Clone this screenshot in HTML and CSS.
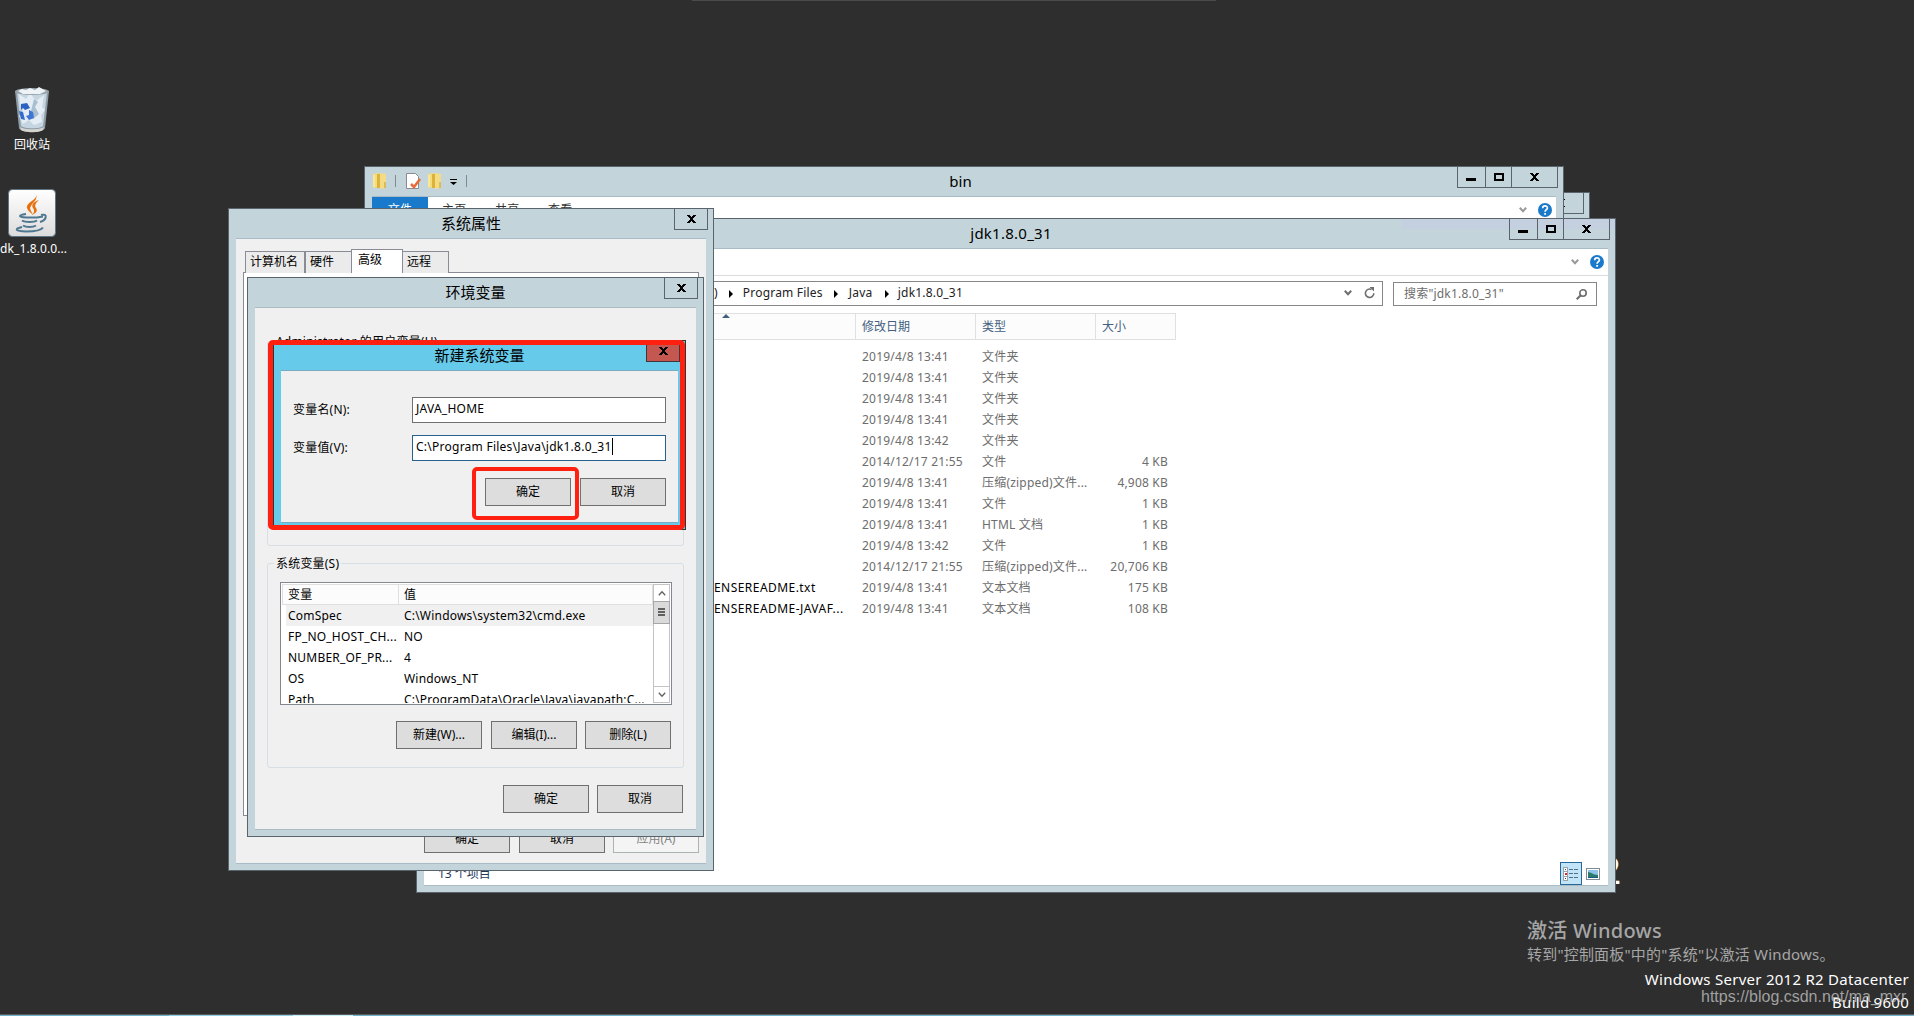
FILE: index.html
```html
<!DOCTYPE html>
<html lang="zh-CN">
<head>
    <meta charset="UTF-8">
    <title>新建系统变量</title>
    <link rel="stylesheet" href="styles.css">
</head>
<body>
<!-- 公用图标 -->
<svg class="icon-defs" width="0" height="0">
    <symbol id="i-close" viewBox="0 0 9 8"><path d="M0 0h3v1h1v1h1v-1h1v-1h3v1h-1v1h-1v1h-1v2h1v1h1v1h1v1h-3v-1h-1v-1h-1v1h-1v1h-3v-1h1v-1h1v-1h1v-2h-1v-1h-1v-1h-1z"/></symbol>
    <symbol id="i-min" viewBox="0 0 10 8"><path d="M0 5h10v3h-10z"/></symbol>
    <symbol id="i-max" viewBox="0 0 10 8"><path fill-rule="evenodd" d="M0 0h10v8h-10zM2 2v4h6v-4z"/></symbol>
    <symbol id="i-chevron" viewBox="0 0 8 6"><path d="M.8 .8L4 4.2 7.2 .8" fill="none" stroke="currentColor" stroke-width="2"/></symbol>
    <symbol id="i-thin" viewBox="0 0 8 6"><path d="M.8 .8L4 4.2 7.2 .8" fill="none" stroke="currentColor" stroke-width="1.300"/></symbol>
    <symbol id="i-help" viewBox="0 0 14 14"><circle cx="7" cy="7" r="7" fill="#1979ca"/><path d="M4.7 5.2c0-3 4.7-2.9 4.7-.3 0 1.700-2.300 1.700-2.300 3.800" fill="none" stroke="#fff" stroke-width="1.700"/><path d="M6.200 10h1.800v1.800h-1.800z" fill="#fff"/></symbol>
    <symbol id="i-folder" viewBox="0 0 13 16"><path d="M0 1l6-1v14l-6 1z" fill="#f4dc7a"/><path d="M4 1h5v14h-5z" fill="#dcb23a"/><path d="M7 0l6 1v14l-6 1z" fill="#f3dc84"/><path d="M1 2v12" stroke="#fff3b8"/><path d="M12 9v6" stroke="#c49a2c"/></symbol>
</svg>

<div class="desktop">
    <!-- 桌面图标 -->
    <div class="shortcut bin-shortcut">
        <svg width="36" height="46" viewBox="0 0 36 46">
            <path d="M1 4l4 37c1 5 25 5 26 0l4-37z" fill="#8e9ca5"/>
            <path d="M3 5l4 34c3 3 20 3 22 0l4-34z" fill="#c5d5e1"/>
            <path d="M5 7l7 5 4-6 6 8 8-6-2 12 3 3-4 5 1 7-8 3-5-5-6 4-4-8 4-5-3-7z" fill="#e5edf4"/>
            <path d="M20 12l4 3-3 5 4 7-6 5-2-8z" fill="#a9bfd1"/>
            <ellipse cx="18" cy="4.500" rx="17" ry="3.500" fill="#98a3ab"/>
            <path d="M4 4l4-2 4 1 4-2 5 2 4-3 7 4-6 3h-17z" fill="#edf3f7"/>
            <path d="M7 17l6-1 3 5-5 2-2-2-2 2z" fill="#2b63c4"/>
            <path d="M15 23l4 2 1 6-5 2-3-4 3-1z" fill="#3c75d4"/>
            <path d="M5 24l4 1 2 8-4-1z" fill="#336bcd"/>
            <path d="M6 40c4 3 20 3 24 0l-1 3c-3 3-19 3-22 0z" fill="#d4d3cf"/>
        </svg>
        <span>回收站</span>
    </div>
    <div class="shortcut java-shortcut">
        <svg width="48" height="48" viewBox="0 0 48 48">
            <defs><linearGradient id="plate" x2="0" y2="1"><stop offset="0" stop-color="#fff"/><stop offset="1" stop-color="#dcdcdc"/></linearGradient></defs>
            <rect x=".5" y=".5" width="47" height="47" rx="4" fill="url(#plate)" stroke="#5d7585"/>
            <path d="M28 5c2 6-10 8-9 14 1 3 3 4 6 7-2-5-4-6-2-9 2-4 7-6 5-12z" fill="#e8700c"/>
            <path d="M31 11c-6 2-8 5-6 8 2 3 1 5-1 7 4-2 6-4 4-7-2-3 0-5 3-8z" fill="#e8700c"/>
            <g fill="none" stroke="#4f7890" stroke-width="2">
                <path d="M18 25c-8 1-8 3 0 3.500h11l6-1"/>
                <path d="M33 26c7-2 6 5-1 7"/>
                <path d="M14 31.500c3 2 12 2 15 0M15 36.500c3 2 10 2 13 0"/>
                <path d="M14 38c-8 2-7 4 4 4.500 9 0 15-1 17-4"/>
            </g>
        </svg>
        <span>dk_1.8.0.0...</span>
    </div>
    <div class="wallpaper-text">2</div>
    <div class="activate">
        <p class="activate-title">激活 Windows</p>
        <p class="activate-note">转到"控制面板"中的"系统"以激活 Windows。</p>
    </div>
    <div class="build">
        <p>Windows Server 2012 R2 Datacenter</p>
        <p>Build 9600</p>
    </div>
    <div class="url">https://blog.csdn.net/ma_mxr</div>
    <div class="top-line"></div>
    <div class="taskbar"></div>

    <!-- 最后面的窗口 -->
    <div class="window back-window">
        <div class="titlebar">
            <div class="controls"><i class="ctl wide"><svg class="x"><use href="#i-close"/></svg></i></div>
        </div>
    </div>

    <!-- bin 窗口 -->
    <div class="window bin-window">
        <div class="titlebar">
            <div class="quick">
                <svg width="13" height="16"><use href="#i-folder"/></svg>
                <i class="bar"></i>
                <svg class="doc" width="15" height="16" viewBox="0 0 15 16"><path d="M.5 .5h9l3 3v12h-12z" fill="#fff" stroke="#858b90"/><path d="M5 11l3 3 6-8" fill="none" stroke="#e8693a" stroke-width="2.500"/></svg>
                <svg class="fold" width="13" height="16"><use href="#i-folder"/></svg>
                <svg class="drop" width="7" height="6" viewBox="0 0 7 6"><path d="M0 0h7v1h-7zM0 3h7l-3.500 3z"/></svg>
                <i class="bar"></i>
            </div>
            <div class="title">bin</div>
            <div class="controls">
                <i class="ctl min"><svg class="m"><use href="#i-min"/></svg></i>
                <i class="ctl max"><svg class="m"><use href="#i-max"/></svg></i>
                <i class="ctl wide"><svg class="x"><use href="#i-close"/></svg></i>
            </div>
        </div>
        <div class="client white">
            <div class="ribbon">
                <span class="file-tab">文件</span><span>主页</span><span>共享</span><span>查看</span>
                <svg class="chev" width="8" height="6"><use href="#i-chevron"/></svg>
                <svg width="14" height="14"><use href="#i-help"/></svg>
            </div>
        </div>
    </div>

    <!-- jdk1.8.0_31 窗口 -->
    <div class="window jdk-window">
        <div class="titlebar">
            <div class="title">jdk1.8.0_31</div>
            <div class="controls">
                <i class="ctl min"><svg class="m"><use href="#i-min"/></svg></i>
                <i class="ctl max"><svg class="m"><use href="#i-max"/></svg></i>
                <i class="ctl wide"><svg class="x"><use href="#i-close"/></svg></i>
            </div>
        </div>
        <div class="client white">
            <div class="ribbon">
                <svg class="chev" width="8" height="6"><use href="#i-chevron"/></svg>
                <svg width="14" height="14"><use href="#i-help"/></svg>
            </div>
            <div class="nav">
                <div class="address">
                    <span class="paren">)</span><i class="arrow"></i>
                    <span class="seg-files">Program Files</span><i class="arrow"></i>
                    <span class="seg-java">Java</span><i class="arrow"></i>
                    <span class="seg-jdk">jdk1.8.0_31</span>
                    <svg class="chev" width="8" height="6"><use href="#i-chevron"/></svg>
                    <svg width="11" height="12" viewBox="0 0 11 12"><path d="M7.500 2.500a4.200 4.200 0 1 0 2.300 3.700" fill="none" stroke="#6d6d6d" stroke-width="1.600"/><path d="M5.500 0h4.500v4.500z" fill="#6d6d6d"/></svg>
                </div>
                <div class="search">
                    <span>搜索"jdk1.8.0_31"</span>
                    <svg width="11" height="11" viewBox="0 0 11 11" fill="none" stroke="#6d6d6d"><circle cx="7" cy="4" r="3.200" stroke-width="1.600"/><path d="M4.700 6.300L.7 10.300" stroke-width="2"/></svg>
                </div>
            </div>
            <div class="file-grid file-head">
                <span><i class="sort"></i></span><span>修改日期</span><span>类型</span><span>大小</span>
            </div>
            <div class="file-list">
                <div class="file-grid"><span></span><span>2019/4/8 13:41</span><span>文件夹</span><span></span></div>
                <div class="file-grid"><span></span><span>2019/4/8 13:41</span><span>文件夹</span><span></span></div>
                <div class="file-grid"><span></span><span>2019/4/8 13:41</span><span>文件夹</span><span></span></div>
                <div class="file-grid"><span></span><span>2019/4/8 13:41</span><span>文件夹</span><span></span></div>
                <div class="file-grid"><span></span><span>2019/4/8 13:42</span><span>文件夹</span><span></span></div>
                <div class="file-grid"><span></span><span>2014/12/17 21:55</span><span>文件</span><span>4 KB</span></div>
                <div class="file-grid"><span></span><span>2019/4/8 13:41</span><span>压缩(zipped)文件...</span><span>4,908 KB</span></div>
                <div class="file-grid"><span></span><span>2019/4/8 13:41</span><span>文件</span><span>1 KB</span></div>
                <div class="file-grid"><span></span><span>2019/4/8 13:41</span><span>HTML 文档</span><span>1 KB</span></div>
                <div class="file-grid"><span></span><span>2019/4/8 13:42</span><span>文件</span><span>1 KB</span></div>
                <div class="file-grid"><span></span><span>2014/12/17 21:55</span><span>压缩(zipped)文件...</span><span>20,706 KB</span></div>
                <div class="file-grid"><span>ENSEREADME.txt</span><span>2019/4/8 13:41</span><span>文本文档</span><span>175 KB</span></div>
                <div class="file-grid"><span>ENSEREADME-JAVAF...</span><span>2019/4/8 13:41</span><span>文本文档</span><span>108 KB</span></div>
            </div>
            <div class="statusbar">
                <span class="count">13 个项目</span>
                <div class="view on"><svg width="16" height="14" viewBox="0 0 16 14"><rect x=".5" y=".5" width="4" height="13" fill="#fff" stroke="#9aa3ab"/><path d="M1 4.500h3M1 9.500h3" stroke="#9aa3ab"/><path d="M2 2h1v1h-1zM2 11h1v1h-1z" fill="#345"/><path d="M2 6h2v2h-2z" fill="#d22"/><path d="M6 2.500h4M11 2.500h4M6 6.500h4M11 6.500h4M6 10.500h4M11 10.500h4" stroke="#51708c"/></svg></div>
                <div class="view"><svg width="14" height="12" viewBox="0 0 14 12"><rect x=".5" y=".5" width="13" height="11" fill="#fff" stroke="#7f8b96"/><path d="M2 2h10v8h-10z" fill="#8cc4ec"/><path d="M2 4c3 0 5 3 10 3v3h-10z" fill="#2c7a6c"/><path d="M2 9h10v1h-10z" fill="#1f5a86"/></svg></div>
            </div>
        </div>
    </div>

    <!-- 系统属性 -->
    <div class="window sys-window">
        <div class="titlebar">
            <div class="title">系统属性</div>
            <div class="controls"><i class="ctl single"><svg class="x"><use href="#i-close"/></svg></i></div>
        </div>
        <div class="client">
            <div class="tabs"><span class="tab t1">计算机名</span><span class="tab t2">硬件</span><span class="tab active">高级</span><span class="tab t4">远程</span></div>
            <div class="tab-panel"></div>
            <div class="buttons"><button>确定</button><button>取消</button><button disabled>应用(A)</button></div>
        </div>
    </div>

    <!-- 环境变量 -->
    <div class="window env-window">
        <div class="titlebar">
            <div class="title">环境变量</div>
            <div class="controls"><i class="ctl single"><svg class="x"><use href="#i-close"/></svg></i></div>
        </div>
        <div class="client">
            <fieldset><legend>Administrator 的用户变量(U)</legend></fieldset>
            <fieldset>
                <legend>系统变量(S)</legend>
                <div class="var-box">
                    <div class="var-table">
                        <div class="var-row var-head"><span>变量</span><span>值</span></div>
                        <div class="var-row selected"><span>ComSpec</span><span>C:\Windows\system32\cmd.exe</span></div>
                        <div class="var-row"><span>FP_NO_HOST_CH...</span><span>NO</span></div>
                        <div class="var-row"><span>NUMBER_OF_PR...</span><span>4</span></div>
                        <div class="var-row"><span>OS</span><span>Windows_NT</span></div>
                        <div class="var-row"><span>Path</span><span>C:\ProgramData\Oracle\Java\javapath;C...</span></div>
                    </div>
                    <div class="scrollbar">
                        <i class="sb-btn"><svg class="up" width="8" height="6"><use href="#i-thin"/></svg></i>
                        <i class="sb-thumb"></i>
                        <i class="sb-btn sb-down"><svg width="8" height="6"><use href="#i-thin"/></svg></i>
                    </div>
                </div>
                <div class="buttons"><button>新建(W)...</button><button>编辑(I)...</button><button>删除(L)</button></div>
            </fieldset>
            <div class="buttons env-ok"><button>确定</button><button>取消</button></div>
        </div>
    </div>

    <!-- 新建系统变量 -->
    <div class="window new-window">
        <div class="titlebar">
            <div class="title">新建系统变量</div>
            <div class="controls"><i class="ctl single red"><svg class="x"><use href="#i-close"/></svg></i></div>
        </div>
        <div class="client">
            <div class="field"><label>变量名(N):</label><div class="input">JAVA_HOME</div></div>
            <div class="field"><label>变量值(V):</label><div class="input focus">C:\Program Files\Java\jdk1.8.0_31<i class="caret"></i></div></div>
            <div class="buttons"><button>确定</button><button>取消</button></div>
        </div>
    </div>

    <!-- 红框标注 -->
    <div class="mark mark-dialog"></div>
    <div class="mark mark-ok"></div>
</div>
</body>
</html>
```

FILE: styles.css
```css
* {
    box-sizing: border-box;
}

body {
    margin: 0;
    overflow: hidden;
    background: #2e2e2e;
    color: #000;
    font: 12px/16px "Noto Sans", "Noto Sans CJK SC", sans-serif;
    letter-spacing: 0.2px;
}

p {
    margin: 0;
}

i {
    display: block;
    flex: none;
}

svg {
    display: block;
    flex: none;
}

.icon-defs {
    position: absolute;
}

.desktop {
    position: relative;
    width: 1914px;
    height: 1016px;
    overflow: hidden;
    white-space: nowrap;
}

/* 桌面图标 */
.shortcut {
    position: absolute;
    display: flex;
    flex-direction: column;
    align-items: center;
    color: #fff;
}

.bin-shortcut {
    left: 14px;
    top: 87px;
    gap: 4px;
    letter-spacing: 0;
}

.java-shortcut {
    left: 0;
    top: 189px;
    gap: 4px;
    align-items: flex-start;
    letter-spacing: 0.1px;
}

.java-shortcut svg {
    margin-left: 8px;
}

/* 桌面文字 */
.wallpaper-text {
    position: absolute;
    left: 1599px;
    top: 844px;
    color: #fff;
    font-size: 39px;
    line-height: 50px;
}

.activate {
    position: absolute;
    left: 1527px;
    top: 917px;
    color: #a6a6a6;
}

.activate-title {
    font-size: 20px;
    line-height: 27px;
    font-weight: 500;
    letter-spacing: 0.3px;
}

.activate-note {
    font-size: 15px;
    line-height: 20px;
}

.build {
    position: absolute;
    right: 5px;
    top: 968px;
    color: #fff;
    font-size: 15px;
    line-height: 23px;
    letter-spacing: 0.27px;
    text-align: right;
}

.url {
    position: absolute;
    left: 1701px;
    top: 987px;
    color: rgba(200, 200, 200, 0.75);
    font: 16px/20px "Liberation Sans", sans-serif;
    letter-spacing: 0;
}

.top-line {
    position: absolute;
    left: 692px;
    top: 0;
    width: 524px;
    height: 1px;
    background: #4b4b4b;
}

.taskbar {
    position: absolute;
    left: 0;
    bottom: 0;
    width: 100%;
    height: 2px;
    border-top: 1px solid #5a5a5a;
    background: linear-gradient(90deg, #6fb3cd 169px, #8fd0e4 169px 293px, #c5eef5 293px 353px, #6fb3cd 353px);
}

/* 窗口 */
.window {
    position: absolute;
    display: flex;
    flex-direction: column;
    border: 1px solid #5b646d;
    background: #c3d5db;
}

.back-window {
    left: 390px;
    top: 192px;
    width: 1200px;
    height: 600px;
}

.bin-window {
    left: 364px;
    top: 166px;
    width: 1200px;
    height: 675px;
}

.jdk-window {
    left: 416px;
    top: 218px;
    width: 1200px;
    height: 675px;
}

.sys-window {
    left: 228px;
    top: 208px;
    width: 486px;
    height: 663px;
}

.env-window {
    left: 247px;
    top: 277px;
    width: 457px;
    height: 560px;
}

.new-window {
    left: 273px;
    top: 340px;
    width: 413px;
    height: 190px;
    border-color: #333;
    background: #66caea;
}

.titlebar {
    display: grid;
    height: 29px;
    flex: none;
}

.titlebar > * {
    grid-area: 1 / 1;
}

.jdk-window .titlebar {
    background: linear-gradient(#c4d0e0, #c4d0e0) right top / 213px 10px no-repeat;
}

.title {
    font-size: 15px;
    line-height: 28px;
    letter-spacing: 0;
    text-align: center;
}

.bin-window .title {
    padding-right: 7px;
}

.jdk-window .title {
    padding-right: 10px;
    letter-spacing: 0.25px;
}

.controls {
    display: flex;
    justify-self: end;
    height: 21px;
    margin-right: 5px;
}

.ctl {
    display: flex;
    align-items: center;
    justify-content: center;
    border-left: 1px solid #5b646d;
    border-bottom: 1px solid #5b646d;
}

.min { width: 28px; padding-right: 1px; }
.max { width: 26px; }

.wide {
    width: 47px;
    border-right: 1px solid #5b646d;
}

.single {
    width: 34px;
    border-right: 1px solid #5b646d;
}

.red {
    background: #c45850;
    border-color: #43363a;
}

.x {
    width: 9px;
    height: 8px;
}

.m {
    width: 10px;
    height: 8px;
}

.client {
    display: flex;
    flex-direction: column;
    flex: 1;
    min-height: 0;
    margin: 0 7px 6px;
    border-top: 1px solid #a9bbc5;
    border-bottom: 1px solid #a9bbc5;
    background: #f0f0f0;
}

.white {
    background: #fff;
}

.new-window .client {
    border-color: #7ba9c0;
}

/* 快速访问工具栏 */
.quick {
    display: flex;
    align-items: center;
    padding: 0 0 2px 8px;
    z-index: 1;
}

.bar {
    width: 1px;
    height: 12px;
    margin-left: 9px;
    background: #7d8b93;
}

.doc { margin-left: 10px; }
.fold { margin-left: 7px; }
.drop { margin: 3px 0 0 9px; }

/* 功能区 */
.ribbon {
    display: flex;
    flex: none;
    align-items: center;
    height: 27px;
    padding-right: 4px;
    color: #333;
}

.ribbon span {
    width: 53px;
    padding-left: 14px;
}

.ribbon .file-tab {
    width: 56px;
    padding-left: 0;
    background: #1979ca;
    color: #fff;
    line-height: 26px;
    text-align: center;
}

.bin-window .ribbon {
    height: 26px;
}

.chev {
    margin-left: auto;
    margin-right: 11px;
    color: #999;
}

.jdk-window .ribbon {
    border-bottom: 1px solid #dadbdc;
}

/* 地址栏 */
.nav {
    display: flex;
    flex: none;
    gap: 10px;
    height: 37px;
    padding: 5px 11px 7px 140px;
}

.address {
    display: flex;
    flex: 1;
    align-items: center;
    border: 1px solid #868686;
    padding: 0 7px 1px 0;
    color: #222;
}

.paren { margin-left: 149px; }

.arrow {
    border: 4px solid transparent;
    border-left-color: #000;
    border-right: 0;
    margin: 1px 0 0 13px;
}

.paren + .arrow { margin-left: 11px; }

.seg-files {
    width: 90px;
    margin-left: 10px;
}

.seg-java {
    width: 23px;
    margin-left: 11px;
}

.seg-jdk {
    margin-left: 9px;
}

.seg-files + .arrow { margin-left: 1px; }

.address .chev {
    margin-right: 12px;
    color: #6d6d6d;
}

.search {
    display: flex;
    align-items: center;
    justify-content: space-between;
    width: 204px;
    margin-top: 1px;
    padding: 0 9px 0 10px;
    border: 1px solid #868686;
    color: #6d6d6d;
}

/* 文件列表 */
.file-grid {
    display: grid;
    grid-template-columns: 432px 120px 120px 80px;
    flex: none;
    height: 21px;
    line-height: 21px;
    color: #6d6d6d;
}

.file-grid span {
    padding-left: 6px;
}

.file-grid span:first-child {
    padding-left: 290px;
    color: #000;
    letter-spacing: 0.45px;
}

.file-grid span:last-child {
    padding: 0 8px 0 0;
    text-align: right;
}

.file-head {
    width: 752px;
    height: 27px;
    line-height: 25px;
    border: 1px solid #dfe0e2;
    border-left: 0;
    background: #fcfcfc;
    color: #44607f;
    letter-spacing: 0;
}

.file-head span {
    border-right: 1px solid #dfe0e2;
}

.file-head span:last-child {
    padding-left: 6px;
    border: 0;
    text-align: left;
}

.sort {
    width: 8px;
    margin-left: 8px;
    border: 4px solid transparent;
    border-top: 0;
    border-bottom-color: #44607f;
}

.file-list {
    flex: 1;
    padding-top: 6px;
}

.statusbar {
    display: flex;
    align-items: flex-end;
    height: 23px;
    gap: 4px;
    padding-right: 8px;
    color: #1e395b;
}

.count {
    margin: 0 auto 3px 14px;
    letter-spacing: 0;
}

.view {
    display: flex;
    align-items: center;
    height: 23px;
}

.on {
    width: 22px;
    justify-content: center;
    border: 1px solid #26689c;
    background: #c2e4f7;
}

/* 按钮 */
.buttons {
    display: flex;
    flex: none;
    justify-content: flex-end;
    gap: 9px;
}

button {
    width: 86px;
    height: 28px;
    padding: 0;
    border: 1px solid #707070;
    background: #ddd;
    color: #000;
    font: inherit;
}

button:disabled {
    border-color: #adb2b5;
    background: #f4f4f4;
    color: #838383;
}

/* 系统属性标签页 */
.tabs {
    display: flex;
    align-items: flex-end;
    height: 34px;
    padding-left: 9px;
    letter-spacing: 0;
}

.tab {
    height: 22px;
    padding-left: 4px;
    border: 1px solid #898c95;
    border-bottom: 0;
    background: #ebebeb;
    line-height: 20px;
}

.t1 { width: 60px; }
.t2 { width: 46px; border-right: 0; }
.t4 { width: 46px; border-left: 0; }

.active {
    width: 52px;
    height: 24px;
    padding-left: 6px;
    background: #fff;
}

.tab-panel {
    height: 544px;
    margin: 0 7px;
    border: 1px solid #898c95;
    background: #fff;
}

.sys-window .tabs {
    z-index: 1;
    margin-bottom: -1px;
}

.sys-window .buttons {
    padding: 9px 7px 0;
}

.sys-window button:last-child,
fieldset button:last-child {
    margin-left: -1px;
}

/* 环境变量 */
.env-window .client {
    padding: 25px 12px 0;
}

fieldset {
    height: 213px;
    min-width: 0;
    margin: 0 0 9px;
    padding: 0 11px 0 12px;
    border: 1px solid #d5dfe5;
    border-radius: 3px;
    flex: none;
}

fieldset .buttons {
    padding-right: 1px;
}

legend {
    margin-left: -6px;
    padding: 1px 2px 0;
}

.var-box {
    display: flex;
    height: 123px;
    margin: 10px 0 16px;
    padding: 1px;
    border: 1px solid #828790;
    background: #fff;
    overflow: hidden;
}

.var-table {
    flex: 1;
    overflow: hidden;
}

.var-row {
    display: grid;
    grid-template-columns: 111px 1fr;
    height: 21px;
    margin-left: 4px;
    line-height: 21px;
}

.var-row span {
    padding-left: 2px;
}

.var-row span + span {
    padding-left: 7px;
}

.var-head {
    margin-left: 0;
    padding-left: 4px;
    border: 1px solid #dedfe1;
    background: #fcfcfc;
    line-height: 20px;
}

.var-head span {
    padding-left: 1px;
}

.var-head span + span {
    padding-left: 5px;
    border-left: 1px solid #dedfe1;
}

.selected {
    background: #f0f0f0;
}

.scrollbar {
    display: flex;
    flex-direction: column;
    width: 17px;
    border: 1px solid #c3c3c3;
    color: #606060;
}

.sb-btn {
    display: flex;
    align-items: center;
    justify-content: center;
    height: 16px;
}

.up {
    transform: rotate(180deg);
}

.sb-thumb {
    height: 23px;
    margin: 0 -1px;
    padding: 6px 4px;
    border: 1px solid #a6a6a6;
    background: repeating-linear-gradient(#606060 0 2px, #dadada 2px 3px) content-box, #dadada;
}

.sb-down {
    margin-top: auto;
    border-top: 1px solid #c3c3c3;
}

.env-ok {
    gap: 8px;
    padding: 8px 1px 0;
}

/* 新建系统变量 */
.new-window .client {
    padding: 26px 12px 0;
}

.new-window .titlebar .title {
    line-height: 29px;
}

.field {
    display: flex;
    flex: none;
    height: 26px;
    margin-bottom: 12px;
}

.field label {
    width: 119px;
    line-height: 26px;
}

.input {
    display: flex;
    flex: 1;
    padding-left: 3px;
    border: 1px solid #707070;
    background: #fff;
    line-height: 22px;
    letter-spacing: 0.25px;
}

.focus {
    border-color: #26608f;
}

.caret {
    width: 1px;
    height: 17px;
    margin-top: 2px;
    background: #000;
}

.new-window .buttons {
    padding-top: 5px;
}

/* 红框 */
.mark {
    position: absolute;
    border: 5px solid #ff2010;
    border-radius: 5px;
}

.mark-dialog {
    left: 268px;
    top: 340px;
    width: 417px;
    height: 190px;
}

.mark-ok {
    left: 472px;
    top: 467px;
    width: 107px;
    height: 53px;
    border-width: 4px;
}
```
